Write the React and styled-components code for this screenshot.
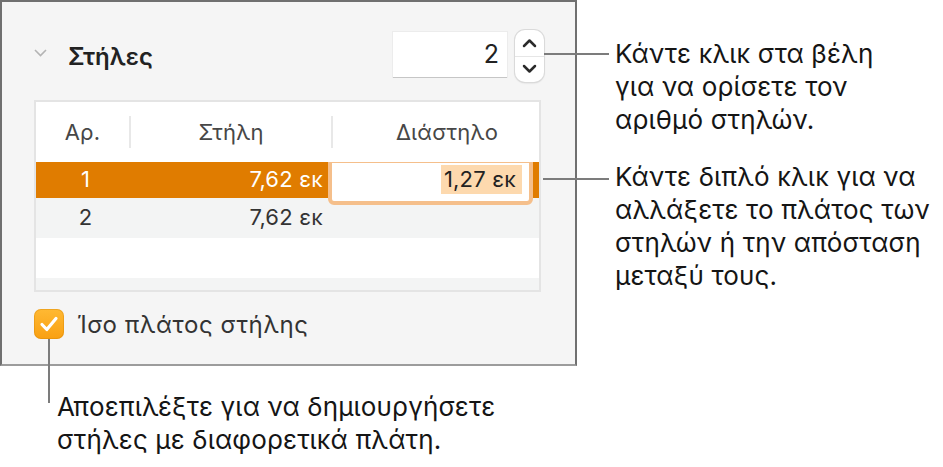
import React from 'react';
import styled, { createGlobalStyle } from 'styled-components';

const GlobalStyle = createGlobalStyle`
  body {
    margin: 0;
    background: #fff;
    font-family: Inter, 'Liberation Sans', Arial, sans-serif;
  }
`;

const Page = styled.div`
  position: relative;
  width: 943px;
  height: 467px;
  display: grid;
  grid-template-columns: 577px 1fr;
  grid-template-rows: 366px 1fr;
  overflow: hidden;
`;

const Panel = styled.section`
  box-sizing: border-box;
  background: #f5f5f5;
  border: 2px solid #707070;
  border-bottom-color: #9c9c9c;
  padding: 28px 31px 0 32px;
`;

const SectionHeader = styled.div`
  display: flex;
  align-items: center;
  height: 52px;
`;

const Disclosure = styled.svg`
  width: 13px;
  height: 8px;
  margin: -6px 21px 0 0;
`;

const Title = styled.h2`
  flex: 1;
  margin: 0;
  font-size: 24px;
  font-weight: 600;
  color: #222;
`;

const NumberField = styled.div`
  box-sizing: border-box;
  width: 114px;
  height: 45px;
  margin-top: -4px;
  padding-right: 8px;
  display: flex;
  align-items: center;
  justify-content: flex-end;
  background: #fff;
  box-shadow: 0 1px 0 #c6c6c6, 0 0 0 1px #ececec;
  font-size: 25px;
  color: #222;
`;

const Stepper = styled.div`
  margin-left: 8px;
  width: 29px;
  height: 52px;
  border-radius: 10px;
  background: #fff;
  box-shadow: 0 0 0 1px #dadada, 0 1px 2px rgba(0, 0, 0, 0.18);
  display: flex;
  flex-direction: column;
  overflow: hidden;
`;

const StepButton = styled.div`
  flex: 1;
  display: flex;
  align-items: center;
  justify-content: center;
  & + & {
    border-top: 1px solid #e6e6e6;
  }
`;

const Table = styled.div`
  box-sizing: border-box;
  margin-top: 18px;
  width: 507px;
  height: 192px;
  border: 2px solid #e4e4e4;
  background: #fff;
  overflow: hidden;
`;

const Row = styled.div`
  display: grid;
  grid-template-columns: 93px 202px 1fr;
  height: ${(p) => p.height}px;
  background: ${(p) => p.bg};
  color: ${(p) => p.fg || '#333'};
  font-size: 22px;
  letter-spacing: 0.2px;
`;

const HeadCell = styled.div`
  align-self: center;
  height: 32px;
  display: flex;
  align-items: center;
  justify-content: center;
  padding-left: ${(p) => p.shift || 0}px;
  border-left: ${(p) => (p.first ? 'none' : '2px solid #e8e8e8')};
  color: #474747;
`;

const Cell = styled.div`
  position: relative;
  display: flex;
  align-items: center;
  justify-content: ${(p) => (p.right ? 'flex-end' : 'center')};
  padding-right: ${(p) => (p.right ? 8 : 0)}px;
  padding-left: ${(p) => (p.right ? 0 : 6)}px;
  padding-bottom: 3px;
`;

const EditBox = styled.div`
  position: absolute;
  left: -3px;
  top: 0;
  width: 205px;
  height: 43px;
  box-sizing: border-box;
  border: 4px solid #f5bf8b;
  border-top-width: 1px;
  border-radius: 0 0 6px 6px;
  background: #fff;
  display: flex;
  align-items: flex-start;
  justify-content: flex-end;
  padding: 2px 7px 0 0;
  color: #222;
`;

const Selection = styled.span`
  background: #fdd9ae;
  padding: 2px 6px 3px 3px;
  line-height: 24px;
`;

const CheckRow = styled.label`
  display: flex;
  align-items: center;
  gap: 13px;
  margin-top: 17px;
  font-size: 24px;
  letter-spacing: 0.6px;
  color: #333;
`;

const CheckBox = styled.span`
  width: 30px;
  height: 30px;
  border-radius: 7px;
  background: linear-gradient(#ffb933, #f9a012);
  box-shadow: inset 0 0 0 1px rgba(210, 130, 0, 0.35);
  display: flex;
  align-items: center;
  justify-content: center;
`;

const RightNotes = styled.div`
  padding: 37px 0 0 38px;
  display: flex;
  flex-direction: column;
  gap: 24px;
`;

const Note = styled.p`
  margin: 0;
  font-size: 26px;
  line-height: 33px;
  letter-spacing: 0.15px;
  color: #151515;
  white-space: nowrap;
`;

const BottomNote = styled.div`
  grid-column: 1 / span 2;
  padding: 24px 0 0 57px;
`;

const Leader = styled.div`
  position: absolute;
  background: #7c7c7c;
  left: ${(p) => p.x}px;
  top: ${(p) => p.y}px;
  width: ${(p) => p.w}px;
  height: ${(p) => p.h}px;
`;

const Chevron = ({ up }) => (
  <svg width="15" height="10" viewBox="0 0 15 10">
    <path
      d={up ? 'M2 8 L7.5 2.5 L13 8' : 'M2 2 L7.5 7.5 L13 2'}
      fill="none"
      stroke="#2b2b2b"
      strokeWidth="2.5"
      strokeLinecap="round"
      strokeLinejoin="round"
    />
  </svg>
);

const columns = [
  { n: '1', width: '7,62 εκ', gap: '1,27 εκ' },
  { n: '2', width: '7,62 εκ', gap: '' },
];

export default function App() {
  return (
    <>
      <GlobalStyle />
      <Page>
        <Panel>
          <SectionHeader>
            <Disclosure viewBox="0 0 13 8">
              <path d="M1 1 L6.5 6.5 L12 1" fill="none" stroke="#b4b4b4" strokeWidth="1.6" />
            </Disclosure>
            <Title>Στήλες</Title>
            <NumberField>2</NumberField>
            <Stepper>
              <StepButton><Chevron up /></StepButton>
              <StepButton><Chevron /></StepButton>
            </Stepper>
          </SectionHeader>

          <Table>
            <Row height={60} bg="#fff">
              <HeadCell first>Αρ.</HeadCell>
              <HeadCell>Στήλη</HeadCell>
              <HeadCell shift={22}>Διάστηλο</HeadCell>
            </Row>
            {columns.map((c, i) => (
              <Row
                key={c.n}
                height={i === 0 ? 36 : 40}
                bg={i === 0 ? '#e07c00' : '#f3f4f4'}
                fg={i === 0 ? '#fff' : '#333'}
              >
                <Cell>{c.n}</Cell>
                <Cell right>{c.width}</Cell>
                <Cell right>
                  {i === 0 ? (
                    <EditBox>
                      <Selection>{c.gap}</Selection>
                    </EditBox>
                  ) : c.gap}
                </Cell>
              </Row>
            ))}
            <Row height={40} bg="#fff" />
            <Row height={40} bg="#f3f4f4" />
          </Table>

          <CheckRow>
            <CheckBox>
              <svg width="20" height="18" viewBox="0 0 20 18">
                <path
                  d="M3 9.5 L7.8 14.5 L17 3.5"
                  fill="none"
                  stroke="#fff"
                  strokeWidth="3.2"
                  strokeLinecap="round"
                  strokeLinejoin="round"
                />
              </svg>
            </CheckBox>
            Ίσο πλάτος στήλης
          </CheckRow>
        </Panel>

        <RightNotes>
          <Note>
            Κάντε κλικ στα βέλη<br />
            για να ορίσετε τον<br />
            αριθμό στηλών.
          </Note>
          <Note>
            Κάντε διπλό κλικ για να<br />
            αλλάξετε το πλάτος των<br />
            στηλών ή την απόσταση<br />
            μεταξύ τους.
          </Note>
        </RightNotes>

        <BottomNote>
          <Note>
            Αποεπιλέξτε για να δημιουργήσετε<br />
            στήλες με διαφορετικά πλάτη.
          </Note>
        </BottomNote>

        <Leader x={544} y={53} w={65} h={2} />
        <Leader x={543} y={178} w={66} h={2} />
        <Leader x={48} y={339} w={2} h={64} />
      </Page>
    </>
  );
}
